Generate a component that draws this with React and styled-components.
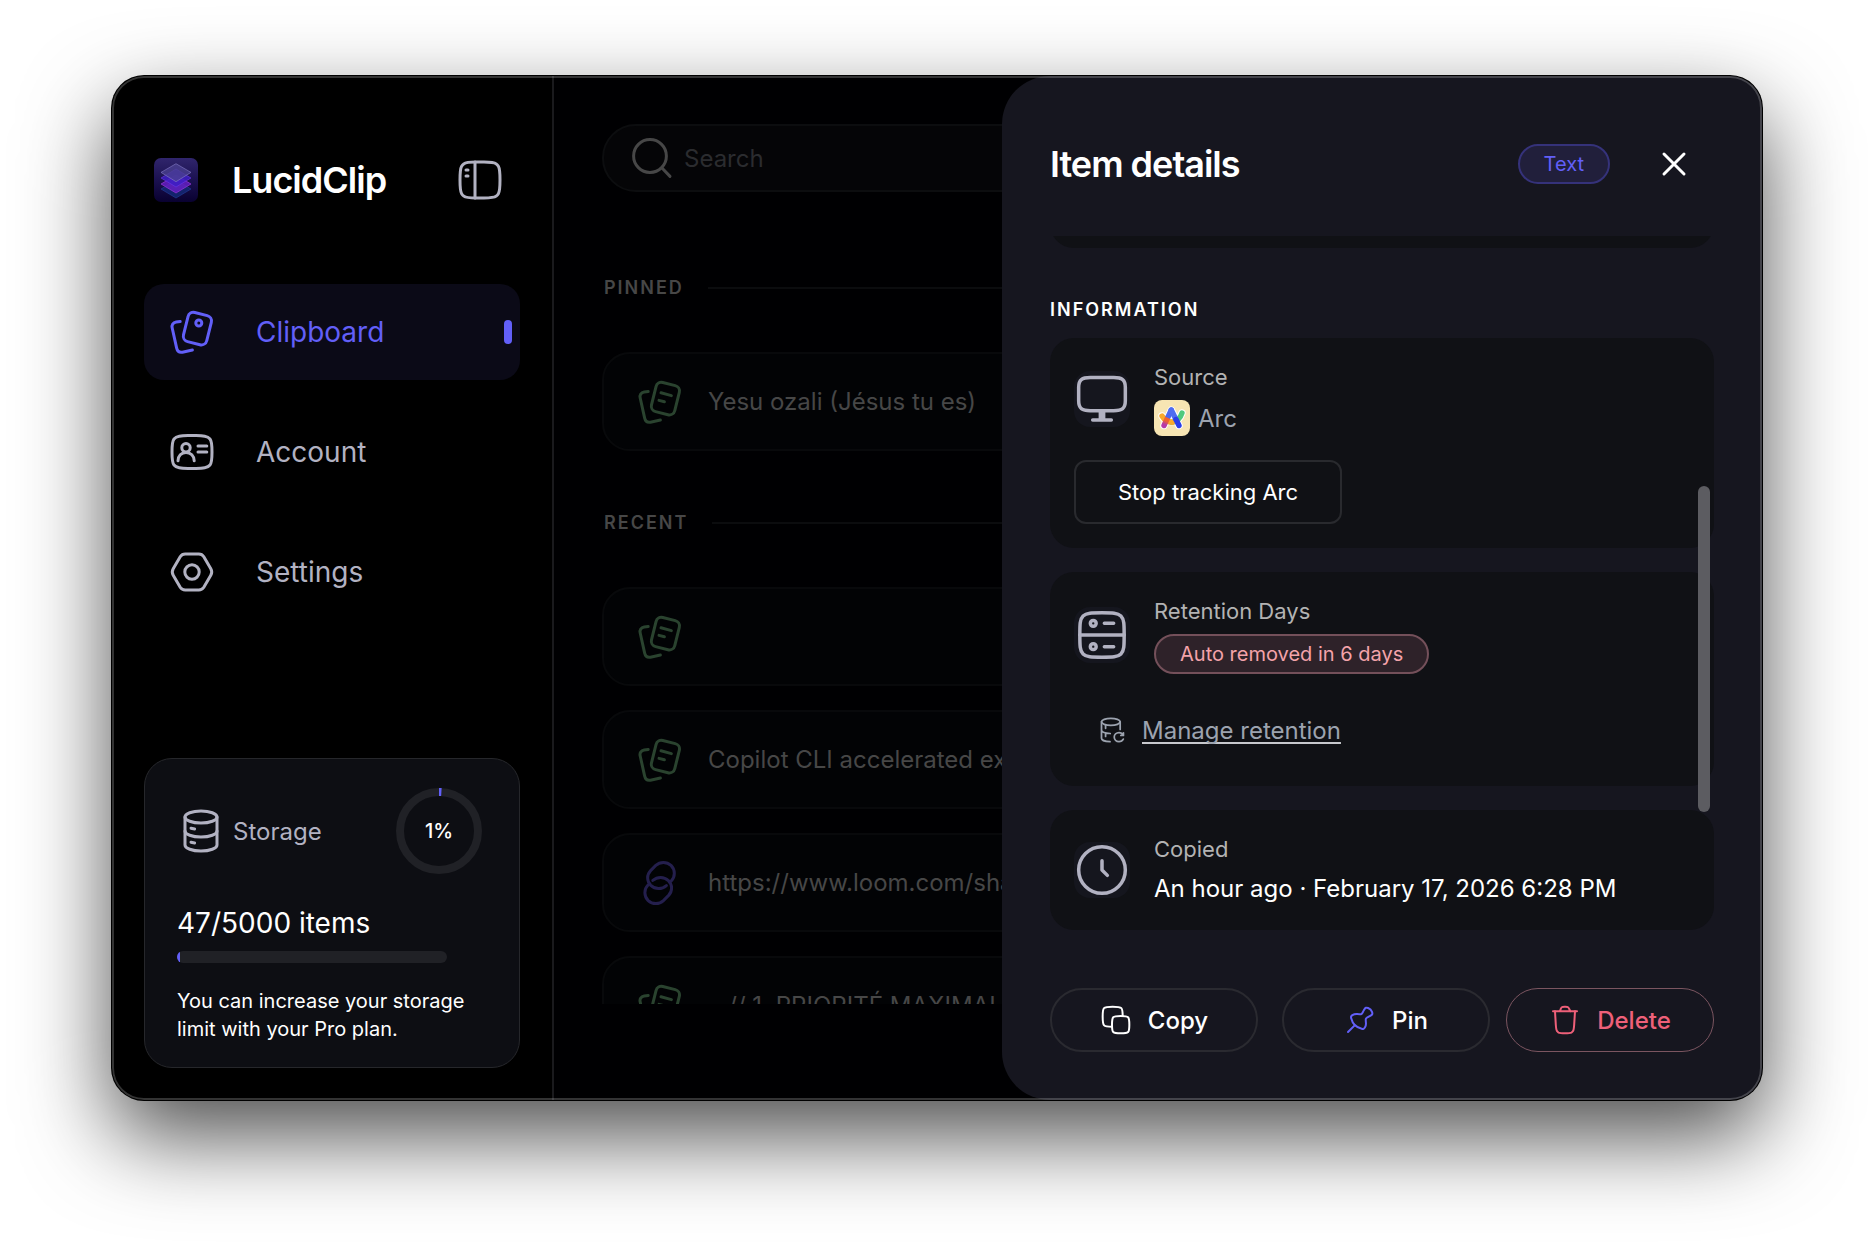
import React from "react";
import styled, { createGlobalStyle } from "styled-components";

const GlobalStyle = createGlobalStyle`
    *, *::before, *::after { box-sizing: border-box; }
    body {
        margin: 0;
        background: #fff;
        font-family: Inter, "Liberation Sans", sans-serif;
        -webkit-font-smoothing: antialiased;
    }
    button, input { font-family: inherit; }
    h1, h2, h3, p, ul { margin: 0; padding: 0; }
    ul { list-style: none; }
`;

/* ---------- icons ---------- */

const Svg = styled.svg`
    display: block;
    flex-shrink: 0;
    width: ${({ $size }) => $size || 48}px;
    height: ${({ $size }) => $size || 48}px;
    fill: none;
    stroke: currentColor;
    stroke-width: 1.5;
    stroke-linecap: round;
    stroke-linejoin: round;
`;

const Icon = ({ size, children }) => (
    <Svg $size={size} viewBox="0 0 24 24" aria-hidden="true">{children}</Svg>
);

const SidebarIcon = () => (
    <Icon>
        <path d="M2 12C2 8.31 2 6.47 2.81 5.16C3.11 4.68 3.49 4.26 3.92 3.91C5.08 3 6.72 3 10 3H14C17.28 3 18.92 3 20.08 3.91C20.51 4.26 20.89 4.68 21.19 5.16C22 6.47 22 8.31 22 12C22 15.69 22 17.53 21.19 18.84C20.89 19.32 20.51 19.74 20.08 20.09C18.92 21 17.28 21 14 21H10C6.72 21 5.08 21 3.92 20.09C3.49 19.74 3.11 19.32 2.81 18.84C2 17.53 2 15.69 2 12Z" />
        <path d="M9.5 3V21M5 7H6M5 10H6" />
    </Icon>
);

const Cards = ({ children }) => (
    <Icon>
        <rect x="8.7" y="2.8" width="12" height="15" rx="2.8" transform="rotate(14 14.7 10.3)" />
        <path d="M6.1 6.7L4.1 7C2.5 7.3 1.7 8.5 2.1 10L4.3 19.9C4.7 21.7 5.6 22.4 7.2 22.1L12.2 21" />
        {children}
    </Icon>
);

const ClipboardIcon = () => <Cards><circle cx="15.4" cy="7.5" r="1.5" /></Cards>;
const NoteIcon = () => <Cards><path d="M12.5 7.4L17.7 8.8M11.5 11.2L14.2 11.9" /></Cards>;

const AccountIcon = () => (
    <Icon>
        <path d="M2 12C2 8.46 2 6.7 3 5.5C4.3 3.9 6.4 3.8 10 3.8H14C17.6 3.8 19.7 3.9 21 5.5C22 6.7 22 8.46 22 12C22 15.54 22 17.3 21 18.5C19.7 20.1 17.6 20.2 14 20.2H10C6.4 20.2 4.3 20.1 3 18.5C2 17.3 2 15.54 2 12Z" />
        <circle cx="9" cy="9.9" r="2.1" />
        <path d="M5 16.4C5 14 6.7 12.2 9 12.2C11.3 12.2 13.1 14 13.1 16.4M15 9H19.4M15 12H19.4" />
    </Icon>
);

const SettingsIcon = () => (
    <Icon>
        <path d="M8.6 3H15.4C16.7 3 17.2 3.3 17.9 4.4L21.4 10.4C22.1 11.6 22.1 12.4 21.4 13.6L17.9 19.6C17.2 20.7 16.7 21 15.4 21H8.6C7.3 21 6.8 20.7 6.1 19.6L2.6 13.6C1.9 12.4 1.9 11.6 2.6 10.4L6.1 4.4C6.8 3.3 7.3 3 8.6 3Z" />
        <circle cx="12" cy="12" r="3.6" />
    </Icon>
);

const DatabaseIcon = () => (
    <Icon>
        <ellipse cx="12" cy="5" rx="8" ry="3" />
        <path d="M4 12C4 13.66 7.58 15 12 15C16.42 15 20 13.66 20 12" />
        <path d="M20 5V19C20 20.66 16.42 22 12 22C7.58 22 4 20.66 4 19V5" />
        <path d="M7 10.6L8.8 11M7 17.6L8.8 18" />
    </Icon>
);

const SearchIcon = () => (
    <Icon><circle cx="11" cy="11" r="8.2" /><path d="M17 17L21 21.2" /></Icon>
);

const LinkIcon = () => (
    <Icon>
        <path d="M15.2 13.3C12.9 15.3 9.6 15.3 7.4 13.2C5.3 11.1 5.3 7.9 7.3 5.8L9.9 3.2C12 1.2 15.4 1.2 17.5 3.2C19.7 5.4 19.7 8.9 17.6 11" />
        <path d="M8.4 10.7C10.7 8.7 14 8.7 16.2 10.8C18.3 12.9 18.3 16.1 16.3 18.2L13.7 20.8C11.6 22.8 8.2 22.8 6.1 20.8C3.9 18.6 3.9 15.1 6 13" />
    </Icon>
);

const MonitorIcon = () => (
    <Icon size={56}>
        <path d="M7 2.8H17C20.6 2.8 22 3.7 22 7V12.8C22 16.1 20.6 17 17 17H7C3.4 17 2 16.1 2 12.8V7C2 3.7 3.4 2.8 7 2.8Z" />
        <path d="M11.3 17.3V20.8M12.7 17.3V20.8M8 21H16" />
    </Icon>
);

const ServerIcon = () => (
    <Icon size={56}>
        <path d="M2.5 12C2.5 7.52 2.5 5.28 3.89 3.89C5.28 2.5 7.52 2.5 12 2.5C16.48 2.5 18.72 2.5 20.11 3.89C21.5 5.28 21.5 7.52 21.5 12C21.5 16.48 21.5 18.72 20.11 20.11C18.72 21.5 16.48 21.5 12 21.5C7.52 21.5 5.28 21.5 3.89 20.11C2.5 18.72 2.5 16.48 2.5 12Z" />
        <path d="M2.5 12H21.5M13 7H17M13 17H17" />
        <circle cx="8.25" cy="7" r="1.25" />
        <circle cx="8.25" cy="17" r="1.25" />
    </Icon>
);

const ClockIcon = () => (
    <Icon size={56}><circle cx="12" cy="12" r="10" /><path d="M12 8V12L14.3 14.3" /></Icon>
);

const DatabaseSyncIcon = () => (
    <Icon size={28}>
        <ellipse cx="11" cy="5" rx="8" ry="3" />
        <path d="M3 5V19C3 20.6 6 21.9 10.3 22M19 5V11.5M3 12C3 13.5 6 14.8 10.5 15M6.5 8V10.5M6.5 15V17.5" />
        <path d="M21.6 16.5C20.9 15 19.6 14.2 18 14.2C15.7 14.2 13.9 15.9 13.9 18.1C13.9 20.3 15.7 22 18 22C19.7 22 21 21.2 21.7 19.8M21.8 14.4V16.7H19.6" />
    </Icon>
);

const CopyIcon = () => (
    <Icon size={32}>
        <path d="M9 15.5C9 12.44 9 10.9 9.95 9.95C10.9 9 12.44 9 15.5 9C18.56 9 20.1 9 21.05 9.95C22 10.9 22 12.44 22 15.5C22 18.56 22 20.1 21.05 21.05C20.1 22 18.56 22 15.5 22C12.44 22 10.9 22 9.95 21.05C9 20.1 9 18.56 9 15.5Z" />
        <path d="M17 9C17 5.7 17 4.1 16 3.1C14.9 2 13.1 2 9.5 2C5.9 2 4.1 2 3 3.1C2 4.1 2 5.9 2 9.5C2 13.1 2 14.9 3.1 16C4.1 17 5.7 17 9 17" />
    </Icon>
);

const PinIcon = () => (
    <Icon size={32}>
        <path d="M3 21L8 16" />
        <path d="M13.26 18.6C9.41 17.68 6.32 14.59 5.4 10.74C5.25 10.12 5.18 9.81 5.38 9.31C5.58 8.82 5.83 8.67 6.32 8.36C7.44 7.66 8.65 7.45 9.91 7.56C11.67 7.71 12.56 7.79 12.99 7.56C13.43 7.33 13.73 6.79 14.33 5.72L15.08 4.36C15.58 3.47 15.83 3.02 16.42 2.81C17 2.6 17.36 2.73 18.07 2.98C19.45 3.48 20.52 4.55 21.02 5.93C21.27 6.64 21.4 7 21.19 7.58C20.98 8.17 20.53 8.42 19.64 8.92L18.25 9.69C17.18 10.28 16.65 10.58 16.42 11.02C16.19 11.47 16.28 12.34 16.44 14.08C16.56 15.36 16.36 16.56 15.65 17.68C15.34 18.17 15.18 18.42 14.69 18.62C14.19 18.82 13.88 18.75 13.26 18.6Z" />
    </Icon>
);

const TrashIcon = () => (
    <Icon size={32}>
        <path d="M19.5 5.5L18.88 15.5C18.72 18.1 18.64 19.4 17.99 20.3C17.67 20.8 17.25 21.2 16.77 21.5C15.8 22 14.57 22 12 22C9.4 22 8.15 22 7.2 21.5C6.7 21.2 6.3 20.8 6 20.3C5.35 19.4 5.27 18.1 5.1 15.5L4.5 5.5" />
        <path d="M3 5.5H21M16.06 5.5L15.37 4.09C14.92 3.15 14.69 2.68 14.3 2.4C13.8 2 13.3 2 12.3 2H11.7C10.6 2 10.1 2 9.6 2.4C9.2 2.7 9 3.2 8.66 4.1L8 5.5" />
    </Icon>
);

const CloseIcon = () => <Icon size={48}><path d="M7 7L17 17M17 7L7 17" /></Icon>;

const Logo = () => (
    <svg width="44" height="44" viewBox="0 0 44 44" role="img" aria-label="LucidClip logo">
        <defs>
            <linearGradient id="logoBg" x1="0" y1="0" x2="0" y2="1">
                <stop offset="0" stopColor="#30256c" />
                <stop offset="0.5" stopColor="#1b1150" />
                <stop offset="1" stopColor="#090130" />
            </linearGradient>
        </defs>
        <rect width="44" height="44" rx="7" fill="url(#logoBg)" />
        <path d="M22 22L37 31L22 40L7 31Z" fill="#142a78" fillOpacity="0.8" stroke="#24409a" strokeWidth="0.6" />
        <path d="M22 17L37 26L22 35L7 26Z" fill="#6a1fc9" fillOpacity="0.8" stroke="#a63be0" strokeWidth="0.6" />
        <path d="M22 11L37 20L22 29L7 20Z" fill="#3d1fc4" fillOpacity="0.85" stroke="#6b35e8" strokeWidth="0.6" />
        <path d="M22 5.7L37 14.4L22 23.7L7 14.4Z" fill="#4a4090" fillOpacity="0.8" stroke="#8880c8" strokeWidth="0.6" />
    </svg>
);

const ArcLogo = () => (
    <svg width="36" height="36" viewBox="0 0 36 36" aria-hidden="true">
        <defs>
            <linearGradient id="arcLeft" gradientUnits="userSpaceOnUse" x1="9" y1="27" x2="17" y2="9">
                <stop offset="0.15" stopColor="#b63aa8" />
                <stop offset="0.35" stopColor="#f0632f" />
                <stop offset="0.5" stopColor="#f0632f" />
                <stop offset="0.55" stopColor="#4b68ee" />
            </linearGradient>
        </defs>
        <rect width="36" height="36" rx="8" fill="#f7e5b3" />
        <g fill="none" strokeLinecap="round" strokeLinejoin="round">
            <path d="M10 25.5L17.3 10L25 25.5M8 16C11 23 24 25 28 13" stroke="#fff" strokeWidth="7.4" />
            <path d="M17.5 22.2C23 21.8 26.3 18.5 28 13" stroke="#4fc97d" strokeWidth="5.4" />
            <path d="M8 16C10.4 20 13 22 18.5 22.2" stroke="#f9a92b" strokeWidth="5.4" />
            <path d="M10 25.5L17.3 10" stroke="url(#arcLeft)" strokeWidth="5.4" />
            <path d="M17.3 10L22 19.5" stroke="#4f6df0" strokeWidth="5.4" />
            <path d="M22 19.5L25 25.5" stroke="#2b3fe8" strokeWidth="5.4" />
        </g>
    </svg>
);

/* ---------- window ---------- */

const Desktop = styled.div`
    display: flex;
    height: 100vh;
    padding: 76px 112px 148px;
    overflow: hidden;
`;

const Window = styled.div`
    position: relative;
    display: flex;
    flex: 1;
    min-width: 0;
    overflow: hidden;
    border-radius: 32px;
    background: #000;
    box-shadow: 0 0 0 1px #000, 0 36px 88px rgba(0, 0, 0, 0.7);

    &::after {
        content: "";
        position: absolute;
        inset: 0;
        border: 2px solid rgba(255, 255, 255, 0.2);
        border-radius: 32px;
        pointer-events: none;
    }
`;

/* ---------- sidebar ---------- */

const Sidebar = styled.aside`
    display: flex;
    flex-direction: column;
    flex-shrink: 0;
    width: 442px;
    padding: 80px 32px 32px;
    border-right: 2px solid #1a1a1d;
    color: #b2b2c2;
`;

const Brand = styled.div`
    display: flex;
    align-items: center;
    padding: 0 16px 0 10px;
    margin-bottom: 80px;
`;

const BrandName = styled.h1`
    flex: 1;
    margin-left: 34px;
    color: #fff;
    font-size: 36px;
    font-weight: 600;
    line-height: 48px;
    letter-spacing: -1px;
`;

const IconButton = styled.button`
    display: flex;
    padding: 0;
    border: 0;
    background: none;
    color: ${({ $color }) => $color || "inherit"};
    cursor: pointer;
`;

const Nav = styled.nav`
    display: flex;
    flex-direction: column;
    gap: 24px;
`;

const NavLink = styled.a`
    display: flex;
    align-items: center;
    gap: 40px;
    height: 96px;
    padding: 0 8px 0 24px;
    border-radius: 20px;
    background: ${({ $active }) => ($active ? "#0b0a17" : "transparent")};
    color: ${({ $active }) => ($active ? "#625ff8" : "inherit")};
    font-size: 28px;
    text-decoration: none;
`;

const ActiveMark = styled.span`
    width: 8px;
    height: 24px;
    margin-left: auto;
    border-radius: 4px;
    background: #625ff8;
`;

const StorageCard = styled.section`
    margin-top: auto;
    padding: 28px 32px 24px;
    border: 1px solid #26272b;
    border-radius: 28px;
    background: #0d0e13;
    color: #fff;
`;

const StorageTop = styled.div`
    display: flex;
    align-items: center;
    gap: 8px;
    padding-right: 4px;
    color: #b2b2c2;
`;

const StorageLabel = styled.h2`
    flex: 1;
    font-size: 24px;
    font-weight: 400;
`;

const Ring = styled.div`
    display: grid;
    width: 88px;
    height: 88px;
    place-items: center;

    > * { grid-area: 1 / 1; }
`;

const RingText = styled.span`
    color: #fff;
    font-size: 20px;
    font-weight: 500;
`;

const StorageCount = styled.p`
    margin-top: 30px;
    font-size: 28px;
    line-height: 36px;
`;

const Meter = styled.div`
    width: 270px;
    max-width: 100%;
    height: 12px;
    margin-top: 10px;
    overflow: hidden;
    border-radius: 6px;
    background: #202126;
`;

const MeterFill = styled.div`
    height: 100%;
    background: #625ff8;
`;

const StorageHint = styled.p`
    margin-top: 24px;
    font-size: 20px;
    line-height: 28px;
`;

/* ---------- clip list ---------- */

const Main = styled.main`
    display: flex;
    flex: 1;
    flex-direction: column;
    min-width: 0;
    padding: 48px 48px 96px;
    background: #000002;
`;

const SearchBar = styled.label`
    display: flex;
    align-items: center;
    flex-shrink: 0;
    gap: 8px;
    height: 68px;
    padding: 0 24px;
    border: 2px solid #0c0d0f;
    border-radius: 34px;
    background: #050507;
    color: #474747;
`;

const SearchInput = styled.input`
    flex: 1;
    min-width: 0;
    padding: 0;
    border: 0;
    outline: 0;
    background: none;
    color: #474747;
    font-size: 24px;

    &::placeholder { color: #2b2c2f; opacity: 1; }
`;

const ClipList = styled.div`
    flex: 1;
    min-height: 0;
    margin-top: 24px;
    overflow: hidden;
`;

const SectionTitle = styled.h2`
    display: flex;
    align-items: center;
    gap: 24px;
    padding: 60px 0 52px 2px;
    color: #474747;
    font-size: 18px;
    font-weight: 600;
    line-height: 24px;
    letter-spacing: 2px;
    text-transform: uppercase;

    &::after {
        content: "";
        flex: 1;
        height: 2px;
        background: #0b0c0e;
    }
`;

const Clips = styled.ul`
    display: flex;
    flex-direction: column;
    gap: 24px;
`;

const Clip = styled.button`
    display: flex;
    align-items: center;
    gap: 24px;
    width: 100%;
    height: 99px;
    padding: 0 32px;
    border: 2px solid #08090b;
    border-radius: 28px;
    background: #020305;
    color: #474747;
    font-size: 24px;
    text-align: left;
    white-space: pre;
`;

const ClipIcon = styled.span`
    color: ${({ $link }) => ($link ? "#241f4d" : "#2a432f")};
`;

/* ---------- details drawer ---------- */

const Drawer = styled.section`
    position: absolute;
    inset: 0 0 0 auto;
    display: flex;
    flex-direction: column;
    width: calc(46% + 1px);
    padding: 64px 48px 48px;
    border-radius: 48px 0 0 48px;
    background: #16161f;
    color: #fff;
`;

const DrawerHead = styled.header`
    display: flex;
    align-items: center;
    flex-shrink: 0;
    gap: 40px;
    height: 96px;
    padding: 0 16px 48px 0;
`;

const DrawerTitle = styled.h2`
    flex: 1;
    font-size: 36px;
    font-weight: 600;
    line-height: 48px;
    letter-spacing: -1px;
`;

const Badge = styled.span`
    display: inline-flex;
    align-items: center;
    height: 40px;
    padding: 0 24px;
    border: 2px solid ${({ $danger }) => ($danger ? "#74505a" : "#35327a")};
    border-radius: 20px;
    background: ${({ $danger }) => ($danger ? "#2e2229" : "#211f3b")};
    color: ${({ $danger }) => ($danger ? "#f4a3aa" : "#625ff8")};
    font-size: 20px;
`;

/* keeps the last cards in view, older content runs off under the header */
const DrawerBody = styled.div`
    display: flex;
    flex: 1;
    flex-direction: column;
    justify-content: flex-end;
    gap: 24px;
    min-height: 0;
    padding-bottom: 58px;
    overflow: hidden;
`;

const Card = styled.article`
    display: flex;
    flex-direction: column;
    align-items: flex-start;
    flex-shrink: 0;
    gap: 24px;
    padding: 24px;
    border-radius: 24px;
    background: #101115;
`;

const PreviewCard = styled(Card)`
    height: 160px;
`;

const GroupTitle = styled.h3`
    flex-shrink: 0;
    padding-top: 26px;
    margin-bottom: -8px;
    font-size: 18px;
    font-weight: 600;
    line-height: 24px;
    letter-spacing: 2px;
    text-transform: uppercase;
`;

const InfoRow = styled.div`
    display: flex;
    align-items: center;
    gap: 24px;
`;

const InfoIcon = styled.span`
    border-radius: 16px;
    background: #15161e;
    color: #b2b2c2;
`;

const InfoText = styled.div`
    display: flex;
    flex-direction: column;
    align-items: flex-start;
    gap: 8px;
`;

const InfoLabel = styled.h4`
    margin: 0;
    color: #b3b3b3;
    font-size: 22px;
    font-weight: 400;
    line-height: 30px;
`;

const AppName = styled.span`
    display: flex;
    align-items: center;
    gap: 8px;
    color: #9ca3af;
    font-size: 24px;
`;

const InfoValue = styled.p`
    font-size: 24px;
    line-height: 34px;
`;

const OutlineButton = styled.button`
    height: 64px;
    padding: 0 42px;
    border: 2px solid #292a2e;
    border-radius: 12px;
    background: none;
    color: #fff;
    font-size: 22px;
`;

const ManageLink = styled.a`
    display: flex;
    align-items: center;
    gap: 16px;
    height: 64px;
    padding: 0 24px;
    color: #9ca3af;
    font-size: 24px;
    text-decoration: none;

    span {
        text-decoration: underline 2px #c8c9cd;
        text-underline-offset: 3px;
        text-decoration-skip-ink: none;
    }
`;

const ScrollThumb = styled.div`
    position: absolute;
    top: 410px;
    right: 52px;
    width: 12px;
    height: 326px;
    border-radius: 6px;
    background: #5c5c61;
`;

const Actions = styled.footer`
    display: flex;
    flex-shrink: 0;
    gap: 16px;
`;

const ActionGroup = styled.div`
    display: flex;
    flex: 1;
    gap: 24px;
`;

const ActionButton = styled.button`
    display: flex;
    flex: 1;
    align-items: center;
    justify-content: center;
    gap: 16px;
    height: 64px;
    padding: 0;
    border: 2px solid #2a2a30;
    border-radius: 32px;
    background: none;
    color: #fff;
    font-size: 24px;
    font-weight: 500;
`;

const DeleteButton = styled(ActionButton)`
    flex: 0 0 208px;
    border: 1px solid #7b5560;
    color: #ee6079;
`;

const PinColor = styled.span`
    color: #625ff8;
`;

const navItems = [
    { label: "Clipboard", icon: <ClipboardIcon />, active: true },
    { label: "Account", icon: <AccountIcon /> },
    { label: "Settings", icon: <SettingsIcon /> },
];

const pinned = [{ id: 1, text: "Yesu ozali (Jésus tu es)" }];

const recent = [
    { id: 2, text: "" },
    { id: 3, text: "Copilot CLI accelerated ex" },
    { id: 4, text: "https://www.loom.com/share", link: true },
    { id: 5, text: "   // 1. PRIORITÉ MAXIMALE" },
];

const ClipRows = ({ items }) => (
    <Clips>
        {items.map(item => (
            <li key={item.id}>
                <Clip type="button" aria-label={item.text ? undefined : "Empty clip"}>
                    <ClipIcon $link={item.link}>{item.link ? <LinkIcon /> : <NoteIcon />}</ClipIcon>
                    {item.text && <span>{item.text}</span>}
                </Clip>
            </li>
        ))}
    </Clips>
);

const Info = ({ icon, label, children }) => (
    <InfoRow>
        <InfoIcon>{icon}</InfoIcon>
        <InfoText>
            <InfoLabel>{label}</InfoLabel>
            {children}
        </InfoText>
    </InfoRow>
);

const StorageUsage = ({ used, limit }) => {
    const percent = Math.round((used / limit) * 100);

    return (
        <StorageCard>
            <StorageTop>
                <DatabaseIcon />
                <StorageLabel>Storage</StorageLabel>
                <Ring>
                    <svg width="88" height="88" viewBox="0 0 88 88" aria-hidden="true">
                        <circle cx="44" cy="44" r="39" fill="none" stroke="#202126" strokeWidth="8" />
                        <circle
                            cx="44" cy="44" r="39" fill="none" stroke="#625ff8" strokeWidth="8"
                            pathLength="100" strokeDasharray={`${percent} 100`}
                            transform="rotate(-90 44 44)"
                        />
                    </svg>
                    <RingText>{percent}%</RingText>
                </Ring>
            </StorageTop>
            <StorageCount>{used}/{limit} items</StorageCount>
            <Meter><MeterFill style={{ width: `${percent}%` }} /></Meter>
            <StorageHint>You can increase your storage limit with your Pro plan.</StorageHint>
        </StorageCard>
    );
};

export default function App() {
    return (
        <Desktop>
            <GlobalStyle />
            <Window>
                <Sidebar>
                    <Brand>
                        <Logo />
                        <BrandName>LucidClip</BrandName>
                        <IconButton type="button" aria-label="Toggle sidebar"><SidebarIcon /></IconButton>
                    </Brand>
                    <Nav>
                        {navItems.map(({ label, icon, active }) => (
                            <NavLink key={label} href={`#${label.toLowerCase()}`} $active={active}>
                                {icon}
                                {label}
                                {active && <ActiveMark />}
                            </NavLink>
                        ))}
                    </Nav>
                    <StorageUsage used={47} limit={5000} />
                </Sidebar>

                <Main>
                    <SearchBar>
                        <SearchIcon />
                        <SearchInput type="text" placeholder="Search" aria-label="Search" />
                    </SearchBar>
                    <ClipList>
                        <SectionTitle>Pinned</SectionTitle>
                        <ClipRows items={pinned} />
                        <SectionTitle>Recent</SectionTitle>
                        <ClipRows items={recent} />
                    </ClipList>
                </Main>

                <Drawer>
                    <DrawerHead>
                        <DrawerTitle>Item details</DrawerTitle>
                        <Badge>Text</Badge>
                        <IconButton type="button" aria-label="Close" $color="#fff"><CloseIcon /></IconButton>
                    </DrawerHead>
                    <DrawerBody>
                        <PreviewCard />
                        <GroupTitle>Information</GroupTitle>
                        <Card>
                            <Info icon={<MonitorIcon />} label="Source">
                                <AppName><ArcLogo />Arc</AppName>
                            </Info>
                            <OutlineButton type="button">Stop tracking Arc</OutlineButton>
                        </Card>
                        <Card>
                            <Info icon={<ServerIcon />} label="Retention Days">
                                <Badge $danger>Auto removed in 6 days</Badge>
                            </Info>
                            <ManageLink href="#retention">
                                <DatabaseSyncIcon />
                                <span>Manage retention</span>
                            </ManageLink>
                        </Card>
                        <Card>
                            <Info icon={<ClockIcon />} label="Copied">
                                <InfoValue>An hour ago · February 17, 2026 6:28 PM</InfoValue>
                            </Info>
                        </Card>
                    </DrawerBody>
                    <Actions>
                        <ActionGroup>
                            <ActionButton type="button"><CopyIcon />Copy</ActionButton>
                            <ActionButton type="button"><PinColor><PinIcon /></PinColor>Pin</ActionButton>
                        </ActionGroup>
                        <DeleteButton type="button"><TrashIcon />Delete</DeleteButton>
                    </Actions>
                    <ScrollThumb />
                </Drawer>
            </Window>
        </Desktop>
    );
}
